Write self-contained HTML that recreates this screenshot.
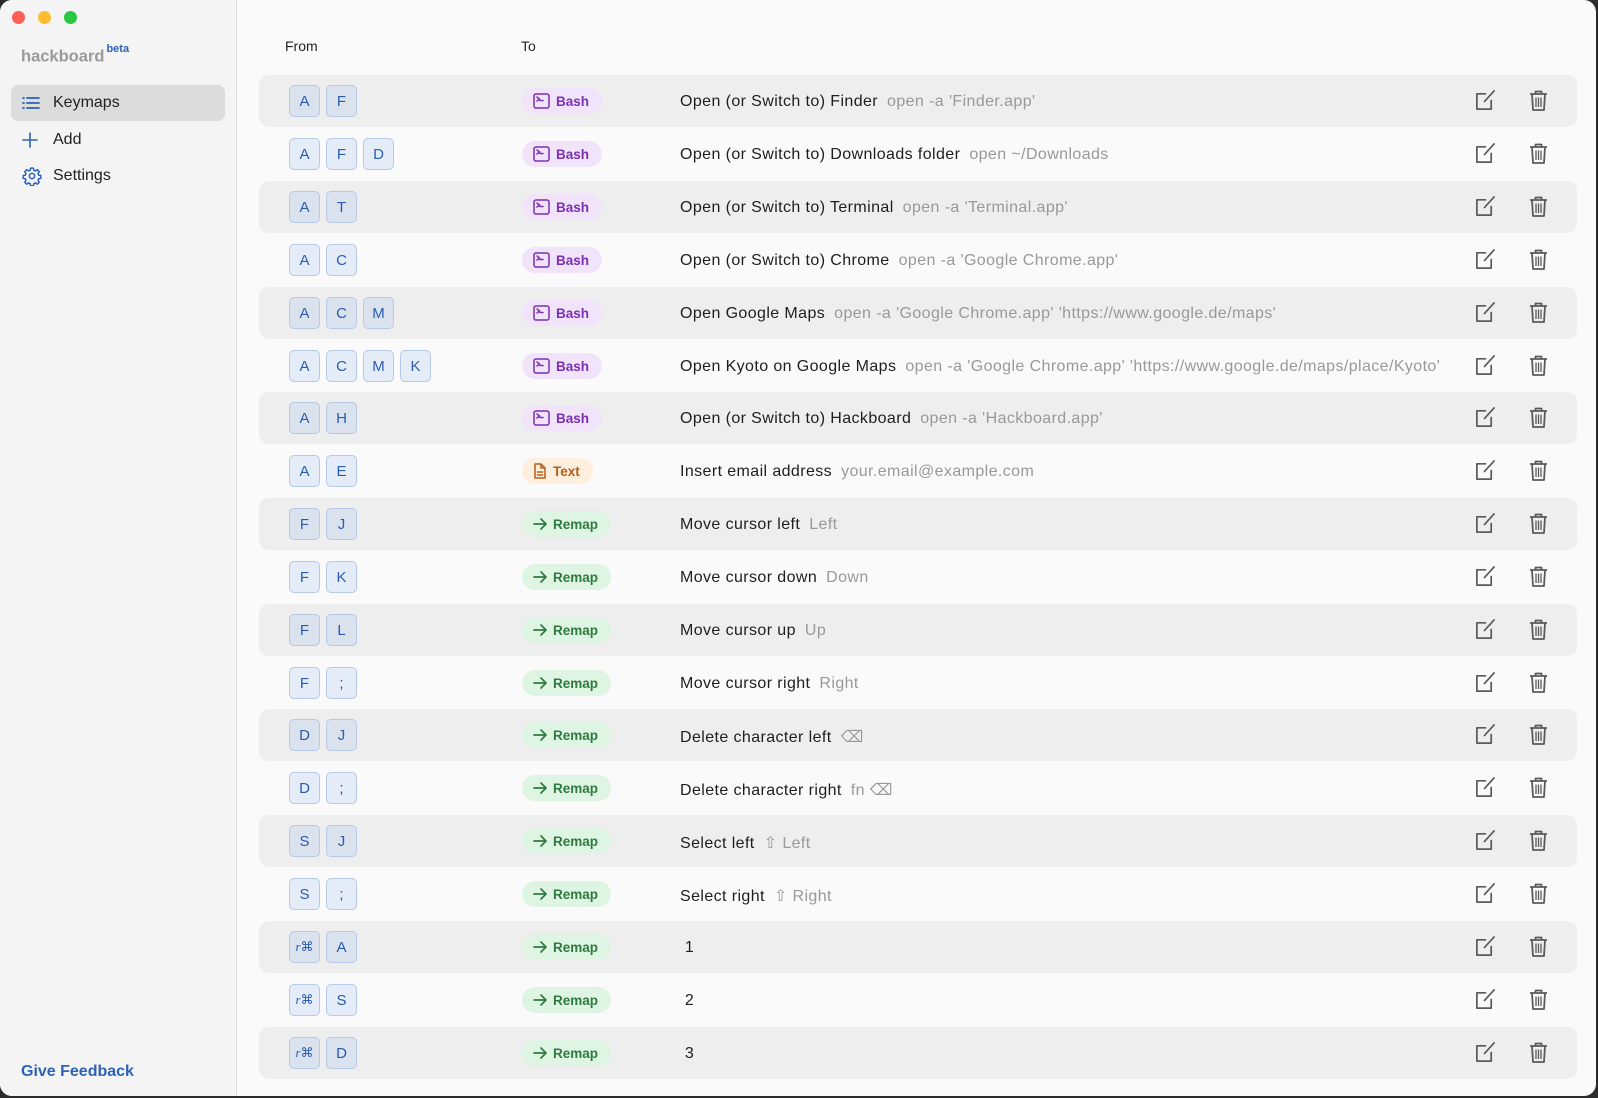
<!DOCTYPE html>
<html><head><meta charset="utf-8"><style>
*{margin:0;padding:0;box-sizing:border-box}
body{width:1598px;height:1098px;background:#2b2b2b;font-family:"Liberation Sans","DejaVu Sans",sans-serif;overflow:hidden;position:relative}
.win{position:absolute;left:0;top:0;width:1596px;height:1096px;background:#fafafa;border-radius:12px;overflow:hidden}
.side{position:absolute;left:0;top:0;width:237px;height:100%;background:#f4f4f4;border-right:1px solid #dedede}
.tl{position:absolute;top:11px;width:13px;height:13px;border-radius:50%}
.logo{position:absolute;left:21px;top:46px;font-size:16.5px;font-weight:bold;color:#9a9a9a}
.logo sup{font-size:11px;color:#2c62b8;position:relative;top:-3px;margin-left:2px}
.nav{position:absolute;left:11px;width:214px;height:36px;border-radius:7px;font-size:16px;color:#222;display:flex;align-items:center;padding-left:42px}
.nav svg{position:absolute;left:11px}
.fb{position:absolute;left:21px;top:1063px;font-size:16px;font-weight:bold;color:#2c62b8}
.hdr{position:absolute;top:38px;font-size:14px;color:#222}
.row{position:absolute;left:259px;width:1318px;height:52px;border-radius:10px}
.row.s{background:#eeeeee}
.keys{position:absolute;left:30px;top:10px;display:flex;gap:6px}
.k{width:31px;height:32px;border:1.5px solid #b6c9e6;border-radius:5px;background:rgba(140,180,240,.2);color:#2a5cb0;font-size:15px;display:flex;align-items:center;justify-content:center}
.b{position:absolute;left:263px;top:13px;height:26px;border-radius:13px;display:flex;align-items:center;padding:0 13px 0 11px;font-size:13.5px;font-weight:bold;gap:6px}
.bash{background:#f1e4fa;color:#7b2fb3}
.text{background:#fdeedd;color:#b55d1b}
.remap{background:#dff5e3;color:#2f7a3f}
.d{position:absolute;left:421px;top:18px;font-size:16px;letter-spacing:0.4px;color:#1e1e1e;white-space:nowrap}
.d span{color:#999;margin-left:9px}
.ic{position:absolute;top:15px}
</style></head><body><div class="win">
<div class="side">
<div class="tl" style="left:12px;background:#fe5f57"></div>
<div class="tl" style="left:38px;background:#febc2e"></div>
<div class="tl" style="left:64px;background:#28c840"></div>
<div class="logo">hackboard<sup>beta</sup></div>
<div class="nav" style="top:85px;background:#dcdcdc"><svg width="18" height="14" viewBox="0 0 18 14" fill="none" stroke="#2c62b8" stroke-width="1.8" stroke-linecap="round"><path d="M1 2h1M1 7h1M1 12h1M5 2h12M5 7h12M5 12h12"/></svg>Keymaps</div>
<div class="nav" style="top:122px"><svg width="16" height="16" viewBox="0 0 16 16" stroke="#2c62b8" stroke-width="1.6" stroke-linecap="round"><path d="M8 1v14M1 8h14"/></svg>Add</div>
<div class="nav" style="top:158px"><svg width="20" height="20" viewBox="0 0 24 24" fill="none" stroke="#2c62b8" stroke-width="1.8" stroke-linejoin="round"><circle cx="12" cy="12" r="3.2"/><path d="M10.3 2.5h3.4l.5 2.6 1.9.8 2.2-1.5 2.4 2.4-1.5 2.2.8 1.9 2.6.5v3.4l-2.6.5-.8 1.9 1.5 2.2-2.4 2.4-2.2-1.5-1.9.8-.5 2.6h-3.4l-.5-2.6-1.9-.8-2.2 1.5-2.4-2.4 1.5-2.2-.8-1.9-2.6-.5v-3.4l2.6-.5.8-1.9-1.5-2.2 2.4-2.4 2.2 1.5 1.9-.8z"/></svg>Settings</div>
<div class="fb">Give Feedback</div>
</div>
<div class="hdr" style="left:285px">From</div>
<div class="hdr" style="left:521px">To</div>
<div id="rows"></div>
</div>
<script>
var R=[
["A F","bash","Open (or Switch to) Finder","open -a 'Finder.app'"],
["A F D","bash","Open (or Switch to) Downloads folder","open ~/Downloads"],
["A T","bash","Open (or Switch to) Terminal","open -a 'Terminal.app'"],
["A C","bash","Open (or Switch to) Chrome","open -a 'Google Chrome.app'"],
["A C M","bash","Open Google Maps","open -a 'Google Chrome.app' 'https://www.google.de/maps'"],
["A C M K","bash","Open Kyoto on Google Maps","open -a 'Google Chrome.app' 'https://www.google.de/maps/place/Kyoto'"],
["A H","bash","Open (or Switch to) Hackboard","open -a 'Hackboard.app'"],
["A E","text","Insert email address","your.email@example.com"],
["F J","remap","Move cursor left","Left"],
["F K","remap","Move cursor down","Down"],
["F L","remap","Move cursor up","Up"],
["F ;","remap","Move cursor right","Right"],
["D J","remap","Delete character left","⌫"],
["D ;","remap","Delete character right","fn ⌫"],
["S J","remap","Select left","⇧ Left"],
["S ;","remap","Select right","⇧ Right"],
["r⌘ A","remap","&nbsp;1",""],
["r⌘ S","remap","&nbsp;2",""],
["r⌘ D","remap","&nbsp;3",""]];
var icons={bash:'<svg width="17" height="16" viewBox="0 0 17 16" fill="none" stroke="currentColor" stroke-width="1.5"><rect x="1" y="1" width="15" height="14" rx="2"/><path d="M4 4l2.5 2L4 8M7 7.5h3" stroke-linecap="round"/></svg>',
text:'<svg width="14" height="16" viewBox="0 0 14 16" fill="none" stroke="currentColor" stroke-width="1.5" stroke-linejoin="round"><path d="M2 1h6l4 4v10H2z M8 1v4h4"/><path d="M4.5 9h5M4.5 12h5" stroke-linecap="round"/></svg>',
remap:'<svg width="14" height="12" viewBox="0 0 14 12" fill="none" stroke="currentColor" stroke-width="1.7" stroke-linecap="round" stroke-linejoin="round"><path d="M1 6h12M8 1l5 5-5 5"/></svg>'};
var names={bash:"Bash",text:"Text",remap:"Remap"};
var h="";
R.forEach(function(r,i){
 var top=Math.round(75.4+i*52.84);
 var ks=r[0].split(" ").map(function(k){return '<div class="k">'+(k=="r⌘"?'<span style="font-size:13px"><i style="font-family:Liberation Serif,serif">r</i>⌘</span>':k)+'</div>'}).join("");
 h+='<div class="row'+(i%2==0?' s':'')+'" style="top:'+top+'px"><div class="keys">'+ks+'</div><div class="b '+r[1]+'">'+icons[r[1]]+names[r[1]]+'</div><div class="d">'+r[2]+(r[3]?'<span>'+r[3]+'</span>':'')+'</div>'+
 '<svg class="ic" style="left:1215px" width="22" height="21" viewBox="0 0 23 22" fill="none" stroke="#5a5a5a" stroke-width="1.8" stroke-linecap="round" stroke-linejoin="round"><path d="M12 4H3v16h15v-9"/><path d="M21 1L11 12"/></svg>'+
 '<svg class="ic" style="left:1270px" width="19" height="21" viewBox="0 0 19 21" fill="none" stroke="#5a5a5a" stroke-width="1.8" stroke-linejoin="round"><path d="M1 4h17M6.5 4V1.5h6V4M3 4l1 16h11l1-16"/><path d="M7 7.5v9.5M9.5 7.5v9.5M12 7.5v9.5" stroke-width="1.3"/></svg></div>';
});
document.getElementById("rows").innerHTML=h;
</script>
</body></html>
